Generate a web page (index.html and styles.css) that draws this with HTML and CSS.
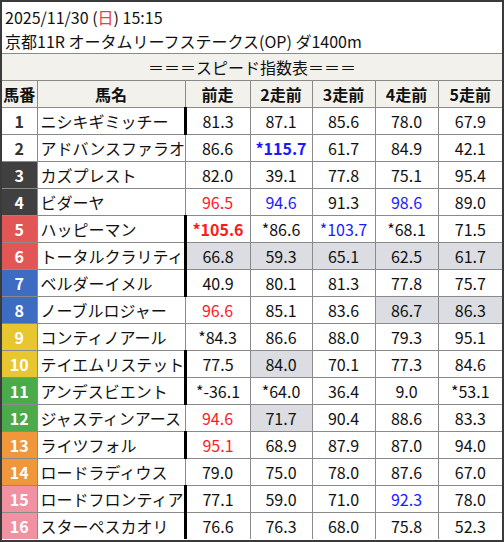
FILE: index.html
```html
<!DOCTYPE html>
<html lang="ja">
<head>
<meta charset="utf-8">
<link rel="stylesheet" href="styles.css">
</head>
<body>
<div class="frame">
  <div class="title">
    <div class="line">2025/11/30 (<span class="sun">日</span>) 15:15</div>
    <div class="line">京都11R オータムリーフステークス(OP) ダ1400m</div>
  </div>
  <table class="sheet">
    <colgroup>
      <col class="c-no"><col class="c-name"><col class="c-r1"><col class="c-r2"><col class="c-r3"><col class="c-r4"><col class="c-r5">
    </colgroup>
    <tr class="cap"><td colspan="7">＝＝＝スピード指数表＝＝＝</td></tr>
    <tr class="head"><th>馬番</th><th>馬名</th><th>前走</th><th>2走前</th><th>3走前</th><th>4走前</th><th>5走前</th></tr>
    <tr><td class="no w1">1</td><td class="name">ニシキギミッチー</td><td class="thick">81.3</td><td>87.1</td><td>85.6</td><td>78.0</td><td>67.9</td></tr>
    <tr><td class="no w1">2</td><td class="name">アドバンスファラオ</td><td>86.6</td><td class="blue b">*115.7</td><td>61.7</td><td>84.9</td><td>42.1</td></tr>
    <tr><td class="no w3">3</td><td class="name">カズプレスト</td><td>82.0</td><td>39.1</td><td>77.8</td><td>75.1</td><td>95.4</td></tr>
    <tr><td class="no w3">4</td><td class="name">ビダーヤ</td><td class="red">96.5</td><td class="blue">94.6</td><td>91.3</td><td class="blue">98.6</td><td>89.0</td></tr>
    <tr><td class="no w5">5</td><td class="name">ハッピーマン</td><td class="thick red b">*105.6</td><td>*86.6</td><td class="blue">*103.7</td><td>*68.1</td><td>71.5</td></tr>
    <tr><td class="no w5">6</td><td class="name">トータルクラリティ</td><td class="thick hl">66.8</td><td class="hl">59.3</td><td class="hl">65.1</td><td class="hl">62.5</td><td class="hl">61.7</td></tr>
    <tr><td class="no w7">7</td><td class="name">ベルダーイメル</td><td class="thick">40.9</td><td>80.1</td><td>81.3</td><td>77.8</td><td>75.7</td></tr>
    <tr><td class="no w7">8</td><td class="name">ノーブルロジャー</td><td class="red">96.6</td><td>85.1</td><td>83.6</td><td class="hl">86.7</td><td class="hl">86.3</td></tr>
    <tr><td class="no w9">9</td><td class="name">コンティノアール</td><td>*84.3</td><td>86.6</td><td>88.0</td><td>79.3</td><td>95.1</td></tr>
    <tr><td class="no w9">10</td><td class="name">テイエムリステット</td><td class="thick">77.5</td><td class="hl">84.0</td><td>70.1</td><td>77.3</td><td>84.6</td></tr>
    <tr><td class="no w11">11</td><td class="name">アンデスビエント</td><td class="thick">*-36.1</td><td>*64.0</td><td>36.4</td><td>9.0</td><td>*53.1</td></tr>
    <tr><td class="no w11">12</td><td class="name">ジャスティンアース</td><td class="red">94.6</td><td class="hl">71.7</td><td>90.4</td><td>88.6</td><td>83.3</td></tr>
    <tr><td class="no w13">13</td><td class="name">ライツフォル</td><td class="thick red">95.1</td><td>68.9</td><td>87.9</td><td>87.0</td><td>94.0</td></tr>
    <tr><td class="no w13">14</td><td class="name">ロードラディウス</td><td>79.0</td><td>75.0</td><td>78.0</td><td>87.6</td><td>67.0</td></tr>
    <tr><td class="no w15">15</td><td class="name">ロードフロンティア</td><td class="thick">77.1</td><td>59.0</td><td>71.0</td><td class="blue">92.3</td><td>78.0</td></tr>
    <tr><td class="no w15">16</td><td class="name">スターペスカオリ</td><td class="thick">76.6</td><td>76.3</td><td>68.0</td><td>75.8</td><td>52.3</td></tr>
  </table>
</div>
</body>
</html>
```
FILE: styles.css
```css
html, body {
  margin: 0;
  padding: 0;
  background: #ffffff;
}
body {
  font-family: "Noto Sans CJK JP", "Noto Sans", sans-serif;
  color: #111111;
}
.frame {
  width: 504px;
  height: 542px;
  box-sizing: border-box;
  border: 2px solid #3a3a3a;
  background: #ffffff;
  overflow: hidden;
}
.title {
  padding: 3px 0 0 3px;
  box-sizing: border-box;
  height: 52px;
  border-bottom: 1px solid #8a8a8a;
}
.title .line {
  font-size: 16px;
  line-height: 24px;
  white-space: nowrap;
}
.sun { color: #e84040; }
.sheet {
  width: 500px;
  table-layout: fixed;
  border-collapse: collapse;
  border-style: hidden;
}
.c-no { width: 35px; }
.c-name { width: 148px; }
.c-r1 { width: 65px; }
.c-r2 { width: 62px; }
.c-r3 { width: 63px; }
.c-r4 { width: 63px; }
.c-r5 { width: 64px; }
.sheet td, .sheet th {
  border: 1px solid #8a8a8a;
  height: 26px;
  padding: 0;
  font-size: 16px;
  line-height: 20px;
  text-align: center;
  white-space: nowrap;
  overflow: hidden;
}
.cap td {
  background: #f2f1ec;
  font-size: 16px;
}
.head th {
  background: #f2f1ec;
  font-weight: bold;
  font-size: 16px;
}
.sheet td.name {
  text-align: left;
  padding-left: 3px;
}
.sheet td.no {
  font-weight: bold;
  color: #ffffff;
}
.w1 { background: #ffffff; color: #333333 !important; }
.w3 { background: #404040; }
.w5 { background: #e35656; }
.w7 { background: #3d6cc2; }
.w9 { background: #e8c630; }
.w11 { background: #4bab4b; }
.w13 { background: #f0973b; }
.w15 { background: #f092a2; }
.sheet td.thick { border-left: 3px solid #000000; }
.hl { background: #dcdde2; }
.red { color: #ff1a1a; }
.blue { color: #1a1aff; }
.b { font-weight: bold; }
```
